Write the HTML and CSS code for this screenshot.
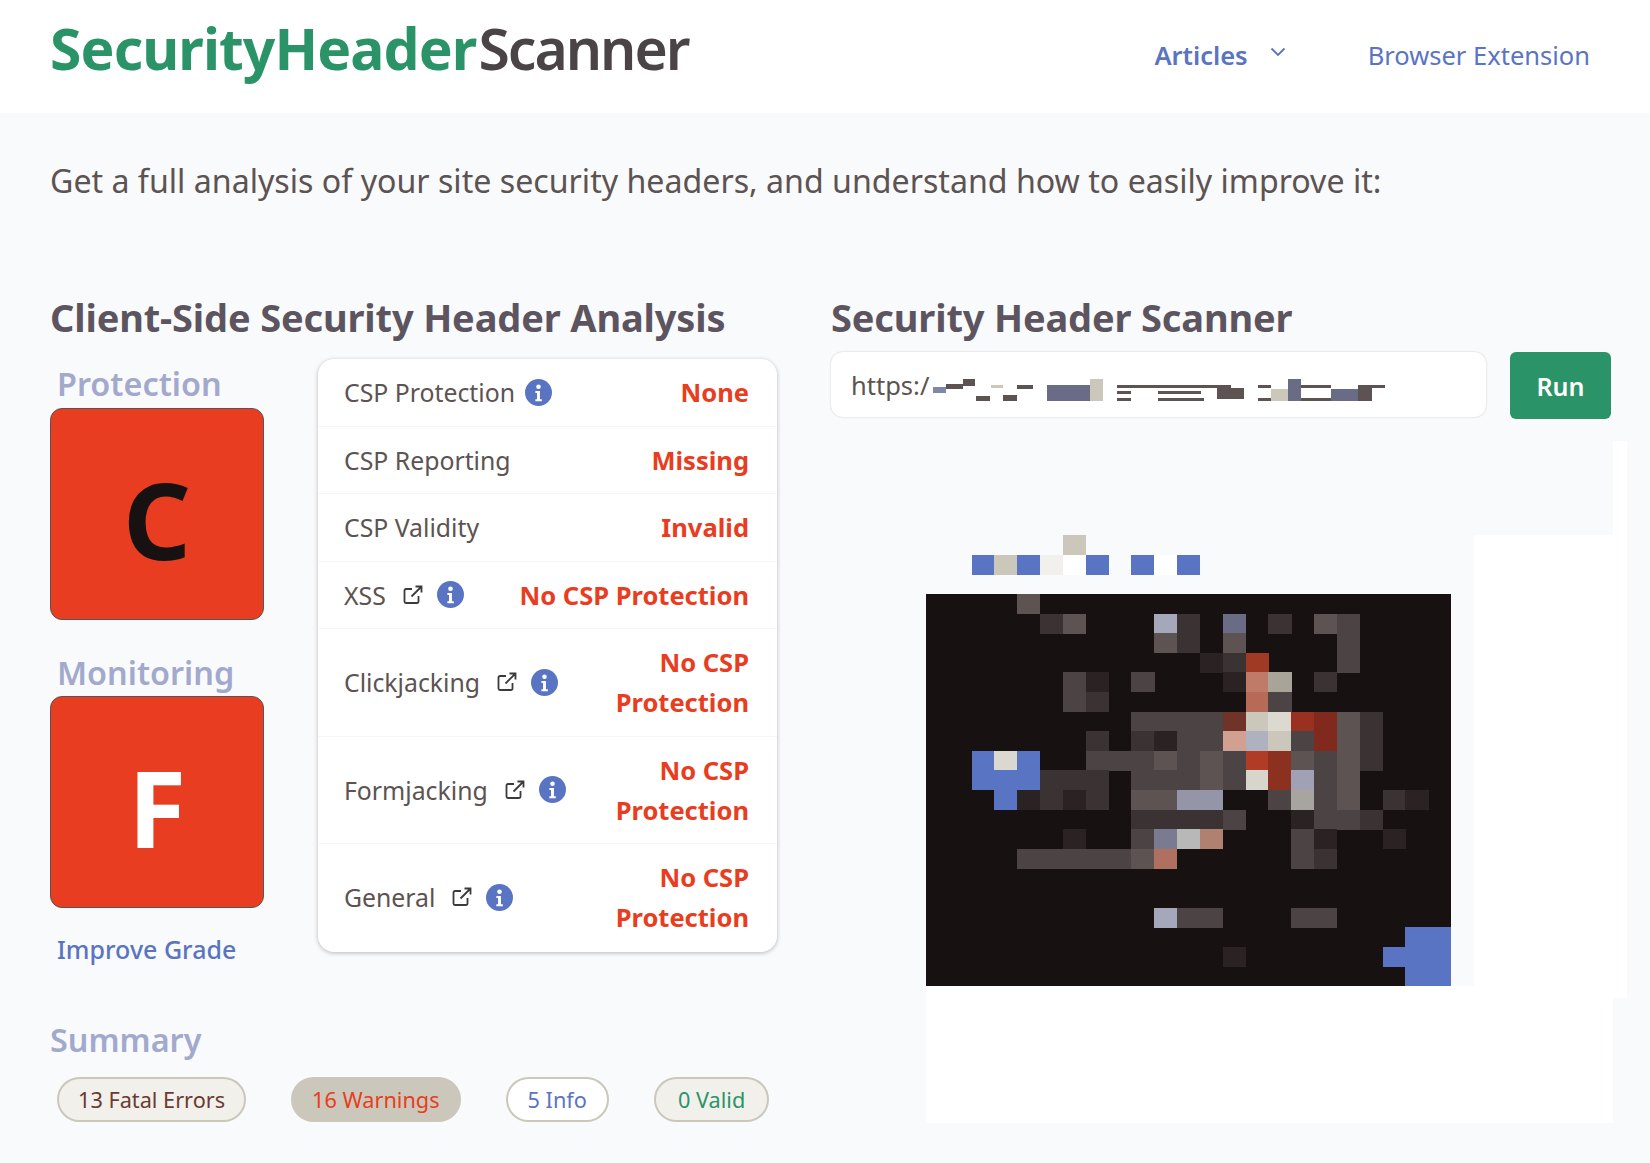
FILE: index.html
```html
<!DOCTYPE html>
<html lang="en">
<head>
    <meta charset="UTF-8">
    <title>Security Header Scanner</title>
    <link rel="stylesheet" href="styles.css">
</head>
<body>
    <header class="topbar">
        <a class="logo" href="#"><span class="logo-green">SecurityHeader</span><span class="logo-dark">Scanner</span></a>
        <nav class="topnav">
            <a class="nav-articles" href="#">Articles
                <svg class="chevron" viewBox="0 0 16 10" width="16" height="10"><path d="M1.5 1.5 8 8l6.5-6.5" fill="none" stroke="#5a74c4" stroke-width="1.8"/></svg>
            </a>
            <a class="nav-link" href="#">Browser Extension</a>
        </nav>
    </header>

    <main class="content">
        <p class="intro">Get a full analysis of your site security headers, and understand how to easily improve it:</p>

        <div class="columns">
            <section class="left-col">
                <h2 class="section-title">Client-Side Security Header Analysis</h2>

                <div class="analysis">
                    <div class="grades">
                        <h3 class="grade-label">Protection</h3>
                        <div class="grade-box grade-dark">C</div>
                        <h3 class="grade-label grade-label-second">Monitoring</h3>
                        <div class="grade-box grade-light">F</div>
                        <a class="improve" href="#">Improve Grade</a>
                    </div>

                    <div class="results">
                        <div class="result-row">
                            <span class="result-name">CSP Protection
                                <svg class="info" viewBox="0 0 26 26"><use href="#info-icon"/></svg>
                            </span>
                            <span class="result-value">None</span>
                        </div>
                        <div class="result-row">
                            <span class="result-name">CSP Reporting</span>
                            <span class="result-value">Missing</span>
                        </div>
                        <div class="result-row">
                            <span class="result-name">CSP Validity</span>
                            <span class="result-value">Invalid</span>
                        </div>
                        <div class="result-row">
                            <span class="result-name">XSS
                                <svg class="ext" viewBox="0 0 20 20"><use href="#ext-icon"/></svg>
                                <svg class="info" viewBox="0 0 26 26"><use href="#info-icon"/></svg>
                            </span>
                            <span class="result-value">No CSP Protection</span>
                        </div>
                        <div class="result-row">
                            <span class="result-name">Clickjacking
                                <svg class="ext" viewBox="0 0 20 20"><use href="#ext-icon"/></svg>
                                <svg class="info" viewBox="0 0 26 26"><use href="#info-icon"/></svg>
                            </span>
                            <span class="result-value result-wrap">No CSP Protection</span>
                        </div>
                        <div class="result-row">
                            <span class="result-name">Formjacking
                                <svg class="ext" viewBox="0 0 20 20"><use href="#ext-icon"/></svg>
                                <svg class="info" viewBox="0 0 26 26"><use href="#info-icon"/></svg>
                            </span>
                            <span class="result-value result-wrap">No CSP Protection</span>
                        </div>
                        <div class="result-row">
                            <span class="result-name">General
                                <svg class="ext" viewBox="0 0 20 20"><use href="#ext-icon"/></svg>
                                <svg class="info" viewBox="0 0 26 26"><use href="#info-icon"/></svg>
                            </span>
                            <span class="result-value result-wrap">No CSP Protection</span>
                        </div>
                    </div>
                </div>

                <h3 class="summary-title">Summary</h3>
                <div class="badges">
                    <span class="badge badge-fatal">13 Fatal Errors</span>
                    <span class="badge badge-warn">16 Warnings</span>
                    <span class="badge badge-info">5 Info</span>
                    <span class="badge badge-valid">0 Valid</span>
                </div>
            </section>

            <section class="right-col">
                <h2 class="section-title">Security Header Scanner</h2>
                <form class="scan-form">
                    <div class="url-input">
                        <span class="url-text">https:/</span>
                        <svg class="url-mask" width="460" height="24" viewBox="0 0 460 24" shape-rendering="crispEdges">
                            <g fill="#5c5352">
                                <rect x="17" y="5" width="17" height="5"/><rect x="34" y="0" width="12" height="7"/>
                                <rect x="47" y="17" width="14" height="5"/><rect x="74" y="16" width="14" height="6"/><rect x="88" y="6" width="16" height="4"/>
                                <rect x="188" y="6" width="14" height="3"/><rect x="188" y="12" width="14" height="3"/><rect x="188" y="19" width="14" height="3"/>
                                <rect x="202" y="6" width="73" height="3"/><rect x="229" y="12" width="43" height="3"/><rect x="229" y="19" width="46" height="3"/>
                                <rect x="275" y="6" width="27" height="3"/><rect x="288" y="9" width="27" height="11"/>
                                <rect x="329" y="6" width="13" height="3"/><rect x="329" y="19" width="13" height="3"/>
                                <rect x="372" y="6" width="30" height="3"/><rect x="372" y="19" width="30" height="3"/>
                                <rect x="429" y="6" width="14" height="16"/><rect x="443" y="6" width="13" height="3"/>
                            </g>
                            <rect x="4" y="8" width="13" height="6" fill="#8088a8"/>
                            <rect x="62" y="6" width="12" height="3" fill="#cbc8bb"/>
                            <rect x="118" y="6" width="43" height="16" fill="#6a6b85"/>
                            <rect x="161" y="0" width="13" height="22" fill="#cbc8bb"/>
                            <rect x="342" y="10" width="17" height="12" fill="#cbc8bb"/>
                            <rect x="359" y="0" width="13" height="22" fill="#6a6b85"/>
                            <rect x="402" y="10" width="27" height="12" fill="#6a6b85"/>
                        </svg>
                    </div>
                    <button class="run-btn" type="button">Run</button>
                </form>

                <div class="preview">
                    <svg class="shot" viewBox="0 0 525 450" width="525" height="450" shape-rendering="crispEdges">
                        <rect x="0" y="58" width="525" height="392" fill="#171112"/>
                        <g id="cells"></g>
                    </svg>
                </div>
            </section>
        </div>
    </main>

    <svg width="0" height="0" class="defs">
        <defs>
            <symbol id="info-icon" viewBox="0 0 26 26">
                <circle cx="13" cy="13" r="13" fill="#5a74c4"/>
                <circle cx="13" cy="7.500" r="2.200" fill="#fff"/>
                <path d="M10 11.500h4.400v8h1.800v2h-6.200v-2h1.600v-6h-1.600z" fill="#fff"/>
            </symbol>
            <symbol id="ext-icon" viewBox="0 0 20 20">
                <path d="M9 4H3A1.500 1.500 0 0 0 1.500 5.500v11A1.500 1.500 0 0 0 3 18h11a1.500 1.500 0 0 0 1.500-1.500V11M8.500 11.500 18.500 1.500M12.500 1.500h6v6" fill="none" stroke="#3d3a3c" stroke-width="1.800"/>
            </symbol>
        </defs>
    </svg>

    <script src="cells.js"></script>
</body>
</html>
```

FILE: styles.css
```css
* {
    box-sizing: border-box;
}
body {
    margin: 0;
    height: 1163px;
    overflow: hidden;
    background-color: #f9fafc;
    color: #5c5352;
    font-family: "Noto Sans", "Open Sans", sans-serif;
}
a {
    text-decoration: none;
}
.defs {
    position: absolute;
}

/* top bar */
.topbar {
    display: flex;
    justify-content: space-between;
    align-items: center;
    height: 113px;
    padding: 0 60px 0 50px;
    background-color: #ffffff;
}
.logo {
    font-size: 57px;
    font-weight: 600;
    line-height: 1;
    margin-top: -16px;
}
.logo-green {
    color: #2a9468;
    font-weight: 700;
    letter-spacing: -0.900px;
}
.logo-dark {
    color: #4b4446;
    letter-spacing: -2px;
    margin-left: 2px;
}
.topnav {
    display: flex;
    align-items: center;
    gap: 82px;
    margin-top: -3px;
    font-size: 25.500px;
}
.nav-articles {
    display: flex;
    align-items: center;
    gap: 22px;
    color: #5a74c4;
    font-weight: 600;
}
.chevron {
    margin-top: -6px;
}
.nav-link {
    color: #5a74c4;
}

/* main */
.content {
    padding: 48px 0 0 50px;
}
.intro {
    margin: 0;
    font-size: 32.150px;
    line-height: 40px;
    color: #5c5352;
}
.columns {
    display: flex;
    margin-top: 91px;
}
.left-col {
    width: 781px;
}
.right-col {
    width: 780px;
}
.section-title {
    margin: 0;
    font-size: 38px;
    line-height: 50px;
    font-weight: 700;
    letter-spacing: -0.150px;
    color: #5c5560;
}

/* grades */
.analysis {
    display: flex;
    margin-top: 17px;
}
.grades {
    width: 268px;
}
.grade-label {
    margin: 5px 0 6px 7px;
    font-size: 32.400px;
    line-height: 38px;
    font-weight: 600;
    color: #a2a9cd;
}
.grade-label-second {
    margin: 33px 0 5px 7px;
}
.grade-box {
    display: flex;
    align-items: center;
    justify-content: center;
    width: 214px;
    height: 212px;
    padding-top: 9px;
    border-radius: 12px;
    border: 1px solid #5c5352;
    background-color: #e83d20;
    font-size: 106px;
    font-weight: 700;
}
.grade-dark {
    color: #171112;
}
.grade-light {
    color: #ffffff;
}
.improve {
    display: block;
    margin: 24px 0 0 7px;
    font-size: 25px;
    line-height: 34px;
    font-weight: 500;
    color: #5a74c4;
}

/* result table */
.results {
    width: 459px;
    align-self: flex-start;
    border-radius: 16px;
    background-color: #ffffff;
    box-shadow: 0 1px 4px rgba(90, 85, 80, 0.4);
}
.result-row {
    display: flex;
    justify-content: space-between;
    align-items: center;
    padding: 13.250px 28px 13.250px 26px;
    border-bottom: 1px solid #f5f6f8;
}
.result-row:last-child {
    border-bottom: none;
    padding-bottom: 14.250px;
}
.result-name {
    display: flex;
    align-items: center;
    gap: 10px;
    font-size: 24.800px;
    color: #5c5352;
    white-space: nowrap;
}
.result-value {
    font-size: 25.500px;
    line-height: 40px;
    font-weight: 700;
    color: #e83d20;
    text-align: right;
}
.result-wrap {
    width: 140px;
}
.info {
    width: 27px;
    height: 27px;
}
.ext {
    width: 20px;
    height: 20px;
    margin: 0 4px 0 7px;
}

/* summary */
.summary-title {
    margin: 52px 0 0;
    font-size: 32.400px;
    line-height: 42px;
    font-weight: 600;
    color: #a2a9cd;
}
.badges {
    display: flex;
    gap: 45px;
    margin: 17px 0 0 7px;
}
.badge {
    height: 45px;
    padding: 0 19px;
    border-radius: 23px;
    border: 2px solid #cbc8bb;
    background-color: #f1f0eb;
    font-size: 21.700px;
    line-height: 41px;
}
.badge-fatal {
    color: #6b3a33;
}
.badge-warn {
    background-color: #cbc8bb;
    color: #e83d20;
}
.badge-info {
    padding: 0 20px;
    background-color: #ffffff;
    color: #5a74c4;
}
.badge-valid {
    padding: 0 22px;
    color: #2a9468;
}

/* scanner */
.scan-form {
    display: flex;
    gap: 24px;
    margin-top: 10px;
}
.url-input {
    display: flex;
    align-items: center;
    width: 655px;
    height: 65px;
    padding: 0 20px;
    border-radius: 12px;
    background-color: #ffffff;
    box-shadow: 0 0 2px rgba(90, 85, 80, 0.3);
    font-size: 25.500px;
    color: #5c5352;
}
.url-mask {
    margin-top: 12px;
    flex-shrink: 0;
}
.run-btn {
    width: 101px;
    height: 67px;
    border: none;
    border-radius: 6px;
    background-color: #2a9468;
    color: #ffffff;
    font-family: inherit;
    font-size: 25px;
    font-weight: 600;
}

/* blurred page preview, white panels sit behind it as background layers */
.preview {
    width: 701px;
    height: 682px;
    margin: 22px 0 0 95px;
    padding-top: 95px;
    background-color: transparent;
    background-image: linear-gradient(#ffffff, #ffffff), linear-gradient(#ffffff, #ffffff), linear-gradient(#ffffff, #ffffff);
    background-position: right top, 548px 94px, left 545px;
    background-size: 14px 557px, 139px 451px, 687px 137px;
    background-repeat: no-repeat;
}
.shot {
    display: block;
    overflow: visible;
}
```

FILE: cells.js
```js
// each entry: [column, row, colour]
var gray = '#5c5352', dim = '#3a3233', mid = '#4c4444', faint = '#2a2223', blue = '#5a74c4', sand = '#cbc8bb';
var cellW = 22.83, cellH = 19.6;

var cells = [
    [4,0,gray],[5,1,dim],[6,1,gray],[10,1,'#a5a7bb'],[11,1,dim],[13,1,'#6a6b85'],[15,1,dim],[17,1,gray],[18,1,mid],
    [10,2,gray],[11,2,dim],[13,2,gray],[18,2,mid],
    [12,3,faint],[13,3,dim],[14,3,'#a03a24'],[18,3,mid],
    [6,4,mid],[7,4,faint],[9,4,mid],[13,4,faint],[14,4,'#c07a68'],[15,4,'#a8a598'],[17,4,dim],
    [6,5,mid],[7,5,dim],[14,5,'#b86a58'],[15,5,mid],
    [9,6,mid],[10,6,mid],[11,6,mid],[12,6,mid],[13,6,'#70332a'],[14,6,sand],[15,6,'#dcdad0'],[16,6,'#9a3020'],[17,6,'#80291c'],[18,6,gray],[19,6,dim],
    [7,7,dim],[9,7,dim],[10,7,faint],[11,7,mid],[12,7,mid],[13,7,'#d0a090'],[14,7,'#b0b1c0'],[15,7,sand],[16,7,mid],[17,7,'#80291c'],[18,7,gray],[19,7,dim],
    [2,8,blue],[3,8,'#dad8d0'],[4,8,blue],[7,8,mid],[8,8,mid],[9,8,mid],[10,8,gray],[11,8,mid],[12,8,gray],[13,8,mid],[14,8,'#b03c26'],[15,8,'#8c3020'],[16,8,gray],[17,8,mid],[18,8,gray],[19,8,dim],
    [2,9,blue],[3,9,blue],[4,9,blue],[5,9,dim],[6,9,dim],[7,9,dim],[9,9,mid],[10,9,mid],[11,9,mid],[12,9,gray],[13,9,mid],[14,9,'#d8d6cc'],[15,9,'#8c3020'],[16,9,'#a0a1b4'],[17,9,mid],[18,9,gray],
    [3,10,blue],[4,10,faint],[5,10,dim],[6,10,faint],[7,10,dim],[9,10,gray],[10,10,gray],[11,10,'#9495a8'],[12,10,'#9495a8'],[15,10,mid],[16,10,'#a8a5a0'],[17,10,mid],[18,10,gray],[20,10,dim],[21,10,faint],
    [9,11,dim],[10,11,dim],[11,11,dim],[12,11,dim],[13,11,mid],[16,11,faint],[17,11,mid],[18,11,mid],[19,11,dim],
    [6,12,faint],[9,12,mid],[10,12,'#7a7a90'],[11,12,'#b8b8b8'],[12,12,'#b08070'],[16,12,mid],[17,12,faint],[20,12,faint],
    [4,13,mid],[5,13,mid],[6,13,mid],[7,13,mid],[8,13,mid],[9,13,gray],[10,13,'#b07060'],[16,13,mid],[17,13,dim],
    [10,16,'#a5a7bb'],[11,16,mid],[12,16,mid],[16,16,mid],[17,16,mid],
    [13,18,faint],
    [21,17,blue],[22,17,blue],[20,18,blue],[21,18,blue],[22,18,blue],[21,19,blue],[22,19,blue]
];
// the row of blocks above the dark area
var topCells = [
    [2,-2,blue],[3,-2,sand],[4,-2,blue],[5,-2,'#f1f0ec'],[6,-2,'#ffffff'],[7,-2,blue],[9,-2,blue],[10,-2,'#ffffff'],[11,-2,blue],[6,-3,sand]
];

var group = document.getElementById('cells');
cells.concat(topCells).forEach(function (c) {
    var r = document.createElementNS('http://www.w3.org/2000/svg', 'rect');
    r.setAttribute('x', c[0] * cellW);
    r.setAttribute('y', 58 + c[1] * cellH);
    r.setAttribute('width', cellW + 0.3);
    r.setAttribute('height', cellH + 0.3);
    r.setAttribute('fill', c[2]);
    group.appendChild(r);
});
```
